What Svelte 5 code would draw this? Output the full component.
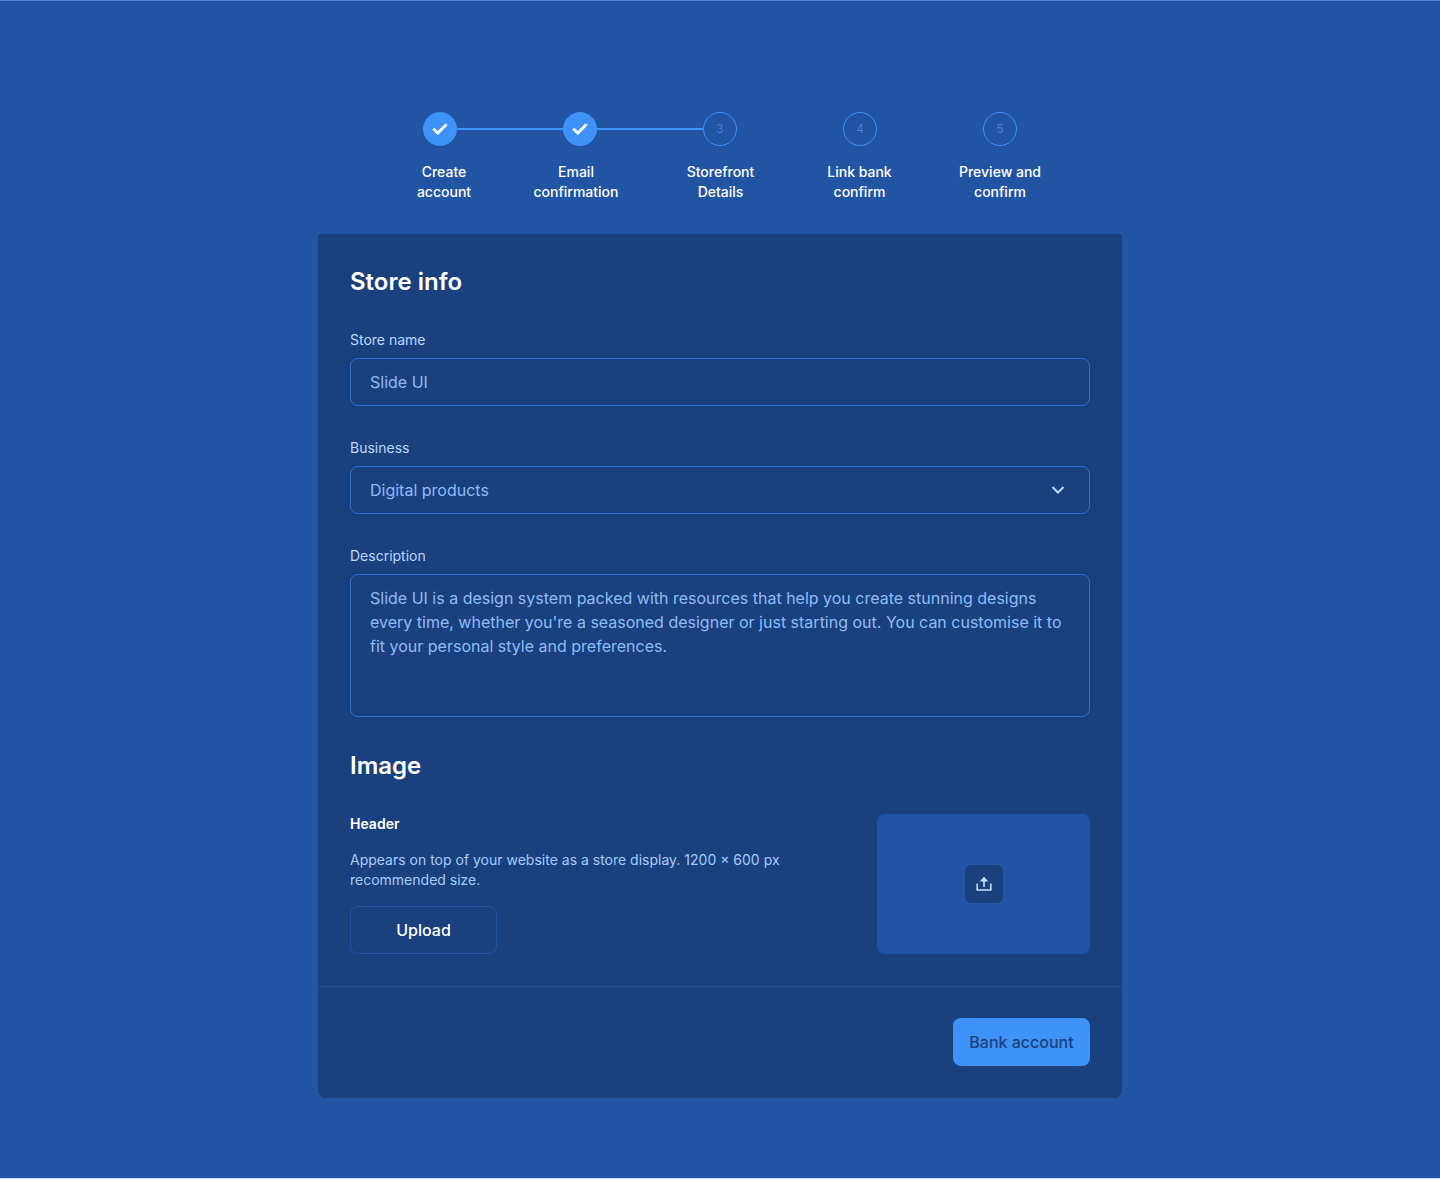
<script>
  const steps = [
    { number: 1, lines: ['Create', 'account'], done: true },
    { number: 2, lines: ['Email', 'confirmation'], done: true },
    { number: 3, lines: ['Storefront', 'Details'], done: false },
    { number: 4, lines: ['Link bank', 'confirm'], done: false },
    { number: 5, lines: ['Preview and', 'confirm'], done: false }
  ];

  let storeName = $state('Slide UI');
  let business = $state('Digital products');
  let description = $state(
    "Slide UI is a design system packed with resources that help you create stunning designs every time, whether you're a seasoned designer or just starting out. You can customise it to fit your personal style and preferences."
  );
</script>

<main>
  <div class="stepper">
    <div class="markers" aria-hidden="true">
      {#each steps as step}
        {#if step.number > 1}
          <span class="line" class:active={steps[step.number - 2].done}></span>
        {/if}
        <span class="marker" class:done={step.done}>
          {#if step.done}
            <svg width="16" height="12" viewBox="0 0 16 12" fill="none">
              <path d="M1.300 5.800 5.800 10.100 14.600 1.300" stroke="#fff" stroke-width="2.800" />
            </svg>
          {:else}
            {step.number}
          {/if}
        </span>
      {/each}
    </div>
    <ol class="labels">
      {#each steps as step}
        <li aria-current={step.number === 3 ? 'step' : undefined}>
          {step.lines[0]}<br />{step.lines[1]}
        </li>
      {/each}
    </ol>
  </div>

  <form class="card" onsubmit={(event) => event.preventDefault()}>
    <div class="body">
      <section class="fields">
        <h2>Store info</h2>
        <div class="field">
          <label for="store-name">Store name</label>
          <input id="store-name" type="text" bind:value={storeName} />
        </div>
        <div class="field">
          <label for="business">Business</label>
          <div class="select">
            <select id="business" bind:value={business}>
              <option>Digital products</option>
            </select>
            <svg class="chevron" width="14" height="10" viewBox="0 0 14 10" fill="none" aria-hidden="true">
              <path d="m1.5 2 5.5 5.5L12.500 2" stroke="#bfdcff" stroke-width="2" />
            </svg>
          </div>
        </div>
        <div class="field">
          <label for="description">Description</label>
          <textarea id="description" bind:value={description}></textarea>
        </div>
      </section>

      <section class="fields">
        <h2>Image</h2>
        <div class="image-row">
          <div class="image-info">
            <h3>Header</h3>
            <p>Appears on top of your website as a store display. 1200 × 600 px recommended size.</p>
            <button class="upload" type="button">Upload</button>
          </div>
          <div class="preview">
            <button class="pick" type="button" aria-label="Upload header image">
              <svg width="16" height="16" viewBox="0 0 16 16" fill="none" aria-hidden="true">
                <path d="M1.200 7.500v6.500h13.600V7.500" stroke="#c5e0ff" stroke-width="1.600" />
                <path d="M8 11V4" stroke="#c5e0ff" stroke-width="1.600" />
                <path d="M8 .8 12.300 5.500H3.700z" fill="#c5e0ff" />
              </svg>
            </button>
          </div>
        </div>
      </section>
    </div>
    <footer>
      <button class="next" type="submit">Bank account</button>
    </footer>
  </form>
</main>

<style>
  :global(body) {
    background: #2254a4;
  }

  main,
  main * {
    box-sizing: border-box;
  }

  main {
    display: flex;
    flex-direction: column;
    align-items: center;
    gap: 32px;
    min-height: 100vh;
    padding: 111px 16px 80px;
    border-top: 1px solid #4b84d8;
    border-bottom: 1px solid #c3d6f3;
    background: #2254a4;
    color: #fff;
    font-family: Inter, 'Liberation Sans', sans-serif;
    font-size: 14px;
    line-height: 20px;
  }

  h2,
  h3,
  p,
  ol {
    margin: 0;
    padding: 0;
  }

  .stepper {
    display: flex;
    flex-direction: column;
    gap: 16px;
    width: 100%;
    max-width: 714px;
  }

  .markers {
    display: flex;
    align-items: center;
    width: 100%;
    max-width: 594px;
    margin: 0 auto;
  }

  .marker {
    display: flex;
    flex: none;
    align-items: center;
    justify-content: center;
    width: 34px;
    height: 34px;
    border: 1px solid #3f92f8;
    border-radius: 50%;
    color: #4a8ae6;
    font-size: 12px;
    font-weight: 300;
  }

  .marker.done {
    background: #3f92f8;
  }

  .line {
    flex: 1;
    height: 2px;
  }

  .line.active {
    background: #3f92f8;
  }

  .labels {
    display: grid;
    grid-template-columns: 126fr 138fr 151fr 127fr 154fr;
    padding-left: 18px;
    list-style: none;
    font-weight: 500;
    text-align: center;
  }

  .card {
    width: 100%;
    max-width: 804px;
    border-radius: 2px 2px 8px 8px;
    background: #1a407d;
  }

  .body {
    display: flex;
    flex-direction: column;
    gap: 33px;
    padding: 32px;
  }

  .fields {
    display: flex;
    flex-direction: column;
    gap: 32px;
  }

  h2 {
    font-size: 24px;
    font-weight: 600;
    line-height: 32px;
  }

  .field {
    display: flex;
    flex-direction: column;
    gap: 8px;
  }

  label {
    color: #b9d9ff;
  }

  input,
  select,
  textarea {
    display: block;
    width: 100%;
    height: 48px;
    margin: 0;
    padding: 0 19px;
    border: 1px solid #2f6fd3;
    border-radius: 8px;
    background: transparent;
    color: #8ebcf8;
    font: inherit;
    font-size: 16px;
    line-height: 24px;
    appearance: none;
  }

  textarea {
    height: 143px;
    padding: 11px 19px;
    resize: none;
  }

  .select {
    display: grid;
    align-items: center;
  }

  .select > * {
    grid-area: 1 / 1;
  }

  .chevron {
    justify-self: end;
    margin-right: 25px;
    pointer-events: none;
  }

  .image-row {
    display: flex;
    justify-content: space-between;
    gap: 32px;
  }

  .image-info {
    display: flex;
    flex-direction: column;
    align-items: flex-start;
    gap: 16px;
    max-width: 444px;
  }

  h3 {
    font-size: 14px;
    font-weight: 600;
    line-height: 20px;
  }

  p {
    color: #a4cdff;
  }

  button {
    height: 48px;
    padding: 0 16px;
    border: 0;
    border-radius: 8px;
    font: inherit;
    font-size: 16px;
    font-weight: 500;
    cursor: pointer;
  }

  .upload {
    min-width: 147px;
    border: 1px solid #2352a4;
    background: transparent;
    color: #fff;
  }

  .preview {
    display: flex;
    flex: 0 1 213px;
    align-items: center;
    justify-content: center;
    border-radius: 8px;
    background: #2254a4;
  }

  .pick {
    display: flex;
    align-items: center;
    justify-content: center;
    width: 38px;
    height: 38px;
    padding: 0;
    border-radius: 6px;
    background: #1a407d;
  }

  footer {
    display: flex;
    justify-content: flex-end;
    padding: 31px 32px 32px;
    border-top: 1px solid #24529a;
  }

  .next {
    min-width: 137px;
    background: #3f92f8;
    color: #1a407d;
  }
</style>
